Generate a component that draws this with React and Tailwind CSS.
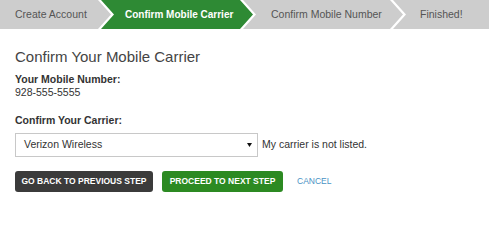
import React from 'react';

const steps = [
  { label: 'Create Account', width: 'w-[111px]', pad: 'pl-[15px]', first: true },
  { label: 'Confirm Mobile Carrier', width: 'w-[152px]', pad: 'pl-[24px]', active: true },
  { label: 'Confirm Mobile Number', width: 'w-[160px]', pad: 'pl-[28px]' },
  { label: 'Finished!', width: 'w-[140px]', pad: 'pl-[27px]' },
];

const FIRST_CLIP = 'polygon(0 0, calc(100% - 13px) 0, 100% 50%, calc(100% - 13px) 100%, 0 100%)';
const MID_CLIP = 'polygon(0 0, calc(100% - 13px) 0, 100% 50%, calc(100% - 13px) 100%, 0 100%, 13px 50%)';

function Breadcrumb() {
  return (
    <div className="flex h-[29px] bg-white overflow-hidden">
      {steps.map((s, i) => (
        <div
          key={s.label}
          className={`${s.width} ${s.pad} ${i > 0 ? '-ml-[10px]' : ''} shrink-0 h-full flex items-center text-[10.5px] ${
            s.active ? 'bg-[#2e8a34] text-white font-bold text-[10px]' : 'bg-[#cdcdcd] text-[#555]'
          }`}
          style={{ clipPath: s.first ? FIRST_CLIP : MID_CLIP }}
        >
          {s.label}
        </div>
      ))}
    </div>
  );
}

export default function App() {
  return (
    <div className="w-[489px] h-[208px] bg-white text-[#333] overflow-hidden" style={{ fontFamily: '"Liberation Sans", Arial, sans-serif' }}>
      <Breadcrumb />
      <div className="px-[15px]">
        <h1 className="mt-[19px] text-[15px] leading-[18px] text-[#444]">Confirm Your Mobile Carrier</h1>

        <div className="mt-[7px] text-[10.5px] leading-[13px]">
          <div className="font-bold">Your Mobile Number:</div>
          <div>928-555-5555</div>
        </div>

        <div className="mt-[15px] text-[10.5px] leading-[13px] font-bold">Confirm Your Carrier:</div>

        <div className="mt-[6px] flex items-center text-[10.5px]">
          <div className="w-[243px] h-[24px] border border-[#c8c8c8] bg-white flex items-center justify-between pl-[8px] pr-[5px]">
            <span>Verizon Wireless</span>
            <svg width="5" height="4" viewBox="0 0 5 4"><path d="M0 0h5L2.5 4z" fill="#111" /></svg>
          </div>
          <span className="ml-[4px]">My carrier is not listed.</span>
        </div>

        <div className="mt-[14px] flex items-center">
          <button className="w-[138px] h-[21px] rounded-[3px] bg-[#3b3b3b] text-white font-bold text-[8.5px] uppercase">
            Go back to previous step
          </button>
          <button className="ml-[9px] w-[121px] h-[21px] rounded-[3px] bg-[#2c8a22] text-white font-bold text-[8.5px] uppercase">
            Proceed to next step
          </button>
          <span className="ml-[14px] text-[8.5px] text-[#4a93c4] uppercase">Cancel</span>
        </div>
      </div>
    </div>
  );
}
